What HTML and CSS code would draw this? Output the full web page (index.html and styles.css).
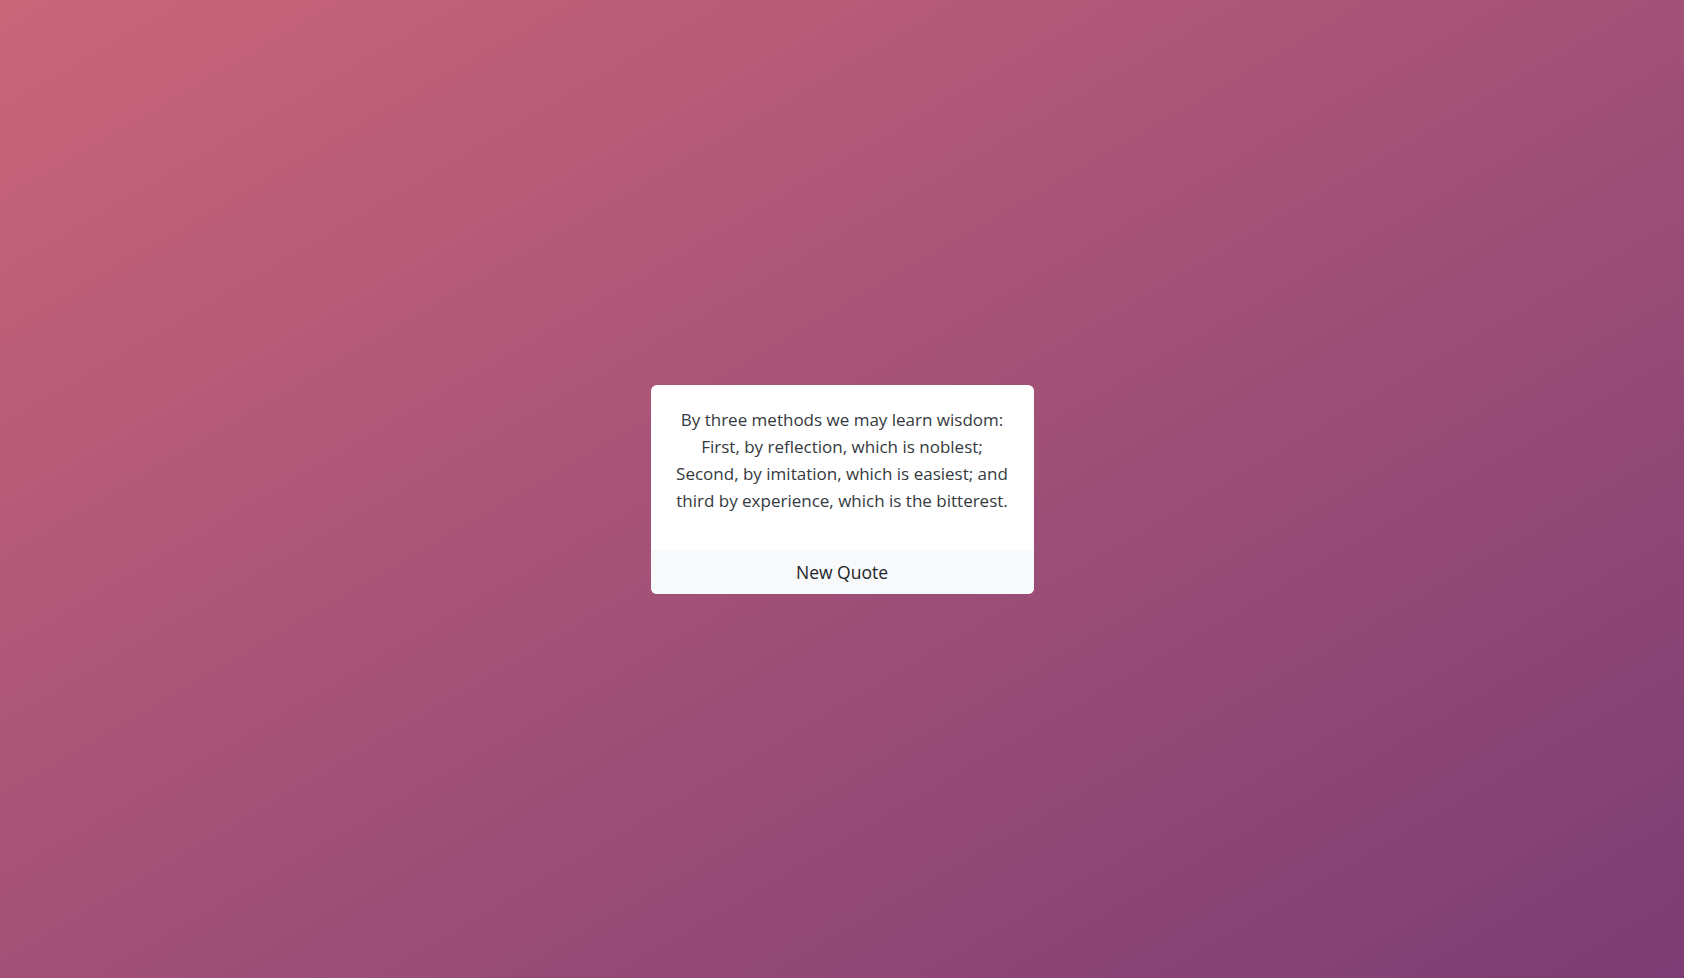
FILE: index.html
```html
<!DOCTYPE html>
<html lang="en">
<head>
<meta charset="utf-8">
<title>Quote</title>
<link rel="stylesheet" href="styles.css">
</head>
<body>
<main class="page">
  <div class="card">
    <p class="quote">By three methods we may learn wisdom: First, by reflection, which is noblest; Second, by imitation, which is easiest; and third by experience, which is the bitterest.</p>
    <button class="btn" type="button">New Quote</button>
  </div>
</main>
</body>
</html>
```
FILE: styles.css
```css
* { box-sizing: border-box; }
html, body { margin: 0; height: 100%; }
body {
  font-family: "Open Sans", "Noto Sans", sans-serif;
  color: #343a40;
  background: linear-gradient(to bottom right, #ca6579, #7b3d74);
}
.page {
  height: 100%;
  display: flex;
  align-items: center;
  justify-content: center;
}
.card {
  width: 383px;
  background: #fff;
  border-radius: 6px;
  overflow: hidden;
  display: flex;
  flex-direction: column;
}
.quote {
  margin: 0;
  padding: 21px 20px 36px;
  text-align: center;
  font-size: 17px;
  line-height: 27px;
}
.btn {
  height: 44px;
  padding: 0;
  border: 0;
  background: #f8f9fa;
  font-family: inherit;
  font-size: 17.5px;
  color: #212529;
  cursor: pointer;
}
```
